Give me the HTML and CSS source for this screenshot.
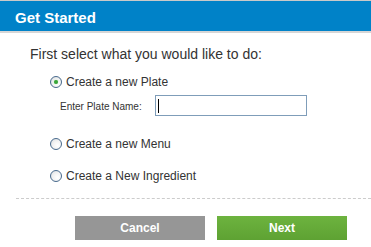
FILE: index.html
```html
<!DOCTYPE html>
<html>
<head>
<meta charset="utf-8">
<link rel="stylesheet" href="styles.css">
</head>
<body>
<div class="dialog">
  <div class="header">Get Started</div>
  <div class="content">
    <p class="intro">First select what you would like to do:</p>
    <div class="options">
      <div class="option">
        <span class="radio checked"></span>
        <span class="option-label">Create a new Plate</span>
      </div>
      <div class="name-row">
        <span class="name-label">Enter Plate Name:</span>
        <span class="name-input"><span class="caret"></span></span>
      </div>
      <div class="option option-menu">
        <span class="radio"></span>
        <span class="option-label">Create a new Menu</span>
      </div>
      <div class="option option-ingredient">
        <span class="radio"></span>
        <span class="option-label">Create a New Ingredient</span>
      </div>
    </div>
  </div>
  <div class="divider"></div>
  <div class="actions">
    <div class="btn btn-cancel">Cancel</div>
    <div class="btn btn-next">Next</div>
  </div>
</div>
</body>
</html>
```

FILE: styles.css
```css
html, body {
  margin: 0;
  padding: 0;
  background: #ffffff;
}
body {
  font-family: "Liberation Sans", Arial, sans-serif;
  color: #333333;
  width: 371px;
  height: 247px;
  overflow: hidden;
}
.header {
  border-top: 1px solid #c9c9c9;
  border-bottom: 2px solid #d6d6d6;
  background: #0082c8;
  height: 26px;
  line-height: 26px;
  padding: 4px 0 0 15px;
  color: #ffffff;
  font-weight: bold;
  font-size: 15px;
}
.content {
  padding-left: 30px;
}
.intro {
  margin: 13px 0 0 0;
  font-size: 14px;
  line-height: 16px;
  color: #333333;
}
.options {
  margin: 12px 0 0 20px;
}
.option {
  display: flex;
  align-items: center;
  height: 16px;
  font-size: 12px;
  line-height: 16px;
}
.option-menu {
  margin-top: 20px;
}
.option-ingredient {
  margin-top: 16px;
}
.radio {
  box-sizing: border-box;
  width: 12px;
  height: 12px;
  border-radius: 50%;
  border: 1px solid #47698c;
  background: radial-gradient(circle at 65% 65%, #ffffff 0%, #f2f2f2 50%, #d4d8dc 100%);
  margin-right: 4px;
  margin-top: -1px;
  position: relative;
  flex: none;
}
.radio.checked::after {
  content: "";
  position: absolute;
  left: 3px;
  top: 3px;
  width: 4px;
  height: 4px;
  border-radius: 50%;
  background: #3aa53a;
  box-shadow: 0 0 1px #7fd07f;
}
.option-label {
  color: #333333;
}
.name-row {
  display: flex;
  align-items: center;
  margin: 5px 0 0 10px;
  height: 21px;
}
.name-label {
  font-size: 10px;
  line-height: 12px;
  color: #333333;
  margin-top: 2px;
}
.name-input {
  box-sizing: border-box;
  width: 152px;
  height: 21px;
  margin-left: 13px;
  border: 1px solid #7f9db9;
  background: #ffffff;
  display: flex;
  align-items: center;
  padding-left: 2px;
}
.caret {
  width: 1px;
  height: 14px;
  background: #000000;
}
.divider {
  margin: 14px 0 0 16px;
  border-top: 1px dashed #cccccc;
}
.actions {
  display: flex;
  gap: 12px;
  padding-left: 75px;
  margin-top: 17px;
}
.btn {
  width: 130px;
  height: 24px;
  line-height: 24px;
  text-align: center;
  color: #ffffff;
  font-weight: bold;
  font-size: 12px;
}
.btn-cancel {
  background: #969696;
}
.btn-next {
  background: linear-gradient(#6db33f, #5ea233);
}
```
